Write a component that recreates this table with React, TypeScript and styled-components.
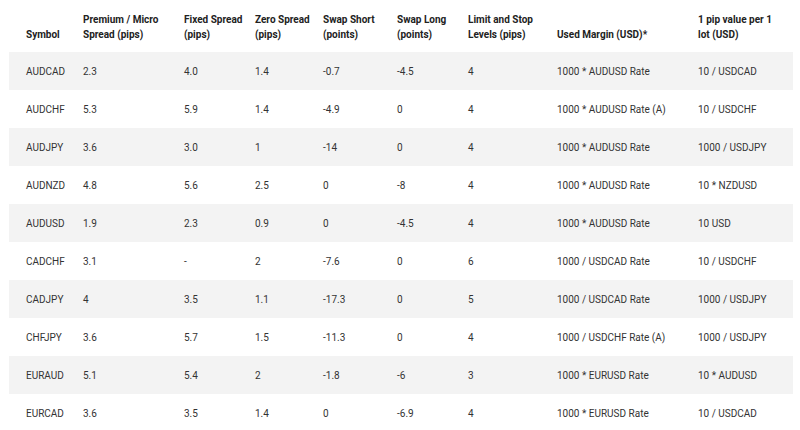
import React from 'react';
import styled, {createGlobalStyle} from 'styled-components';

const GlobalStyle = createGlobalStyle`
  body {
    margin: 0;
    background: #FFFFFF;
    font-family: Roboto, "Liberation Sans", sans-serif;
  }
`;

const Wrapper = styled.div`
  padding: 0 7px 0 9px;
  box-sizing: border-box;
`;

const Table = styled.table`
  width: 100%;
  border-collapse: collapse;
  table-layout: fixed;

  font-size: 10px;
  line-height: 15px;
  color: #333333;
`;

const Th = styled.th`
  height: 52px;
  padding: 0 12px 10px 0;

  font-size: 10px;
  font-weight: 700;
  text-align: left;
  vertical-align: bottom;

  color: #222222;
  box-sizing: border-box;

  &:first-child {
    padding-left: 17px;
  }
`;

const Tr = styled.tr<{$shaded: boolean}>`
  height: 38px;
  background: ${({$shaded}) => ($shaded ? '#F3F3F3' : '#FFFFFF')};
`;

const Td = styled.td`
  padding: 0 8px 0 0;
  vertical-align: middle;
  white-space: nowrap;

  &:first-child {
    padding-left: 17px;
  }
`;

const columns = [
  {title: 'Symbol', width: 74},
  {title: 'Premium / Micro Spread (pips)', width: 101},
  {title: 'Fixed Spread (pips)', width: 71},
  {title: 'Zero Spread (pips)', width: 68},
  {title: 'Swap Short (points)', width: 74},
  {title: 'Swap Long (points)', width: 71},
  {title: 'Limit and Stop Levels (pips)', width: 89},
  {title: 'Used Margin (USD)*', width: 141},
  {title: '1 pip value per 1 lot (USD)', width: 95},
];

const rows = [
  ['AUDCAD', '2.3', '4.0', '1.4', '-0.7', '-4.5', '4', '1000 * AUDUSD Rate', '10 / USDCAD'],
  ['AUDCHF', '5.3', '5.9', '1.4', '-4.9', '0', '4', '1000 * AUDUSD Rate (A)', '10 / USDCHF'],
  ['AUDJPY', '3.6', '3.0', '1', '-14', '0', '4', '1000 * AUDUSD Rate', '1000 / USDJPY'],
  ['AUDNZD', '4.8', '5.6', '2.5', '0', '-8', '4', '1000 * AUDUSD Rate', '10 * NZDUSD'],
  ['AUDUSD', '1.9', '2.3', '0.9', '0', '-4.5', '4', '1000 * AUDUSD Rate', '10 USD'],
  ['CADCHF', '3.1', '-', '2', '-7.6', '0', '6', '1000 / USDCAD Rate', '10 / USDCHF'],
  ['CADJPY', '4', '3.5', '1.1', '-17.3', '0', '5', '1000 / USDCAD Rate', '1000 / USDJPY'],
  ['CHFJPY', '3.6', '5.7', '1.5', '-11.3', '0', '4', '1000 / USDCHF Rate (A)', '1000 / USDJPY'],
  ['EURAUD', '5.1', '5.4', '2', '-1.8', '-6', '3', '1000 * EURUSD Rate', '10 * AUDUSD'],
  ['EURCAD', '3.6', '3.5', '1.4', '0', '-6.9', '4', '1000 * EURUSD Rate', '10 / USDCAD'],
];

const App: React.FunctionComponent = () => {
  return (
    <>
      <GlobalStyle />
      <Wrapper>
        <Table>
          <colgroup>
            {columns.map((c) => (
              <col key={c.title} style={{width: `${c.width}px`}} />
            ))}
          </colgroup>
          <thead>
            <tr>
              {columns.map((c) => (
                <Th key={c.title}>{c.title}</Th>
              ))}
            </tr>
          </thead>
          <tbody>
            {rows.map((row, i) => (
              <Tr key={row[0]} $shaded={i % 2 === 0}>
                {row.map((cell, j) => (
                  <Td key={j}>{cell}</Td>
                ))}
              </Tr>
            ))}
          </tbody>
        </Table>
      </Wrapper>
    </>
  );
};

export default App;
